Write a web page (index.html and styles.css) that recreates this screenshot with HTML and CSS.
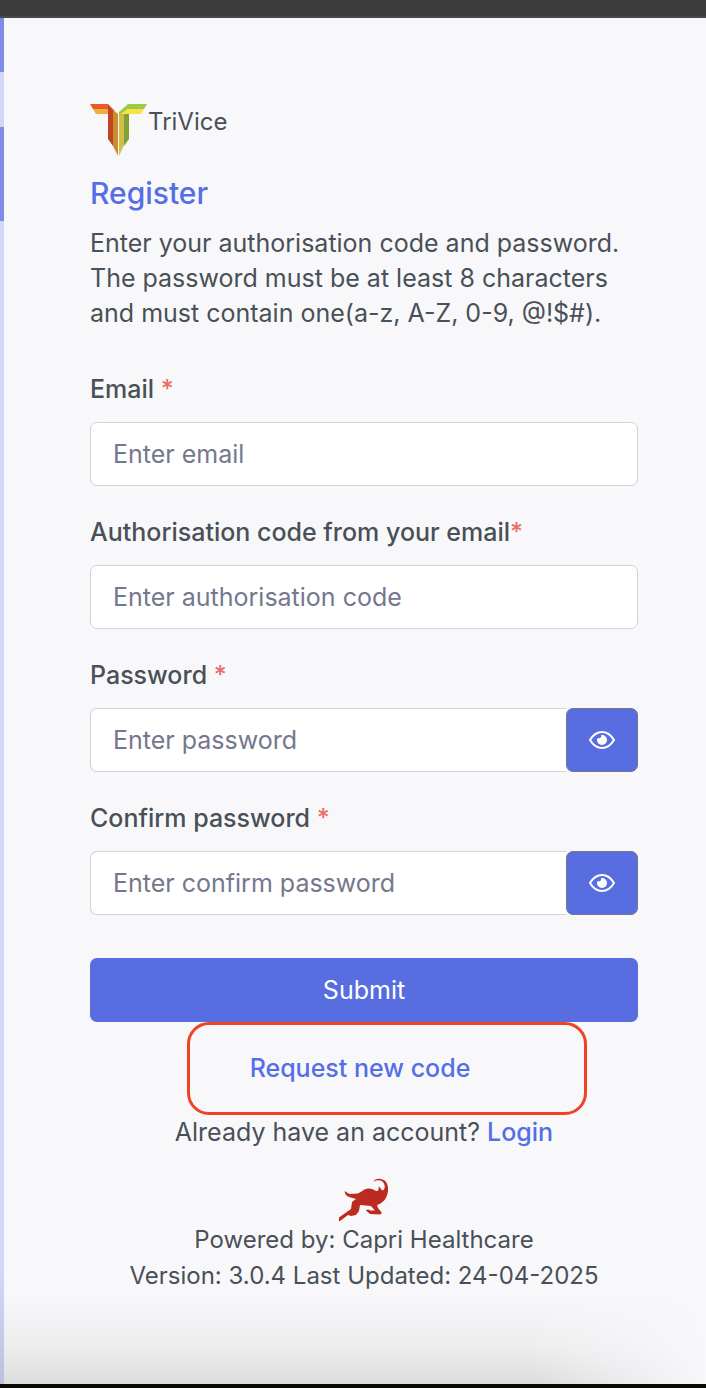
FILE: index.html
```html
<!DOCTYPE html>
<html lang="en">
<head>
    <meta charset="UTF-8">
    <meta name="viewport" content="width=device-width, initial-scale=1.0">
    <title>TriVice | Register</title>
    <link rel="stylesheet" href="styles.css">
</head>
<body>
    <div class="top-bar"></div>

    <div class="page">
        <div class="side-art"></div>

        <main class="register">
            <!-- Logo -->
            <div class="brand">
                <svg class="brand-logo" viewBox="0 0 57 54" aria-hidden="true">
                    <path fill="#e85a2b" d="M0 1h18l7 7-3 1-4-3H3z"/>
                    <path fill="#f0ac3c" d="M3 6h15v5H6z"/>
                    <path fill="#9ccb45" d="M38 1h19l-3 5H38l-6 5h-3V9z"/>
                    <path fill="#fbe343" d="M38 6h16l-3 5H34l-5 1z"/>
                    <path fill="#bd4522" d="M18 2l5 6v35l-5-7z"/>
                    <path fill="#c98c2f" d="M23 7l5 4v42l-5-10z"/>
                    <path fill="#d3bd42" d="M29 11h5v31l-5 11z"/>
                    <path fill="#7da338" d="M34 11h5v25l-5 7z"/>
                </svg>
                <span class="brand-name">TriVice</span>
            </div>

            <h1>Register</h1>
            <p class="intro">Enter your authorisation code and password. The password must be at least 8 characters and must contain one(a-z, A-Z, 0-9, @!$#).</p>

            <!-- Register Form -->
            <form class="register-form">
                <div class="field">
                    <label for="email">Email <span class="required">*</span></label>
                    <input type="email" id="email" placeholder="Enter email">
                </div>
                <div class="field">
                    <label for="code">Authorisation code from your email<span class="required">*</span></label>
                    <input type="text" id="code" placeholder="Enter authorisation code">
                </div>
                <div class="field">
                    <label for="password">Password <span class="required">*</span></label>
                    <div class="input-group">
                        <input type="password" id="password" placeholder="Enter password">
                        <button type="button" class="toggle" aria-label="Show password">
                            <svg viewBox="0 0 28 20" aria-hidden="true">
                                <path fill="none" stroke="#fff" stroke-width="2" d="M2 10C5 5 9 2 14 2s9 3 12 8c-3 5-7 8-12 8S5 15 2 10z"/>
                                <path fill="#fff" d="M14 5a5 5 0 1 1-5 5c0-1 0-1 1-2 2 1 4-1 3-3z"/>
                            </svg>
                        </button>
                    </div>
                </div>
                <div class="field">
                    <label for="confirm">Confirm password <span class="required">*</span></label>
                    <div class="input-group">
                        <input type="password" id="confirm" placeholder="Enter confirm password">
                        <button type="button" class="toggle" aria-label="Show confirm password">
                            <svg viewBox="0 0 28 20" aria-hidden="true">
                                <path fill="none" stroke="#fff" stroke-width="2" d="M2 10C5 5 9 2 14 2s9 3 12 8c-3 5-7 8-12 8S5 15 2 10z"/>
                                <path fill="#fff" d="M14 5a5 5 0 1 1-5 5c0-1 0-1 1-2 2 1 4-1 3-3z"/>
                            </svg>
                        </button>
                    </div>
                </div>
                <button type="submit" class="submit">Submit</button>
            </form>

            <p class="request"><a href="#">Request new code</a></p>
            <p class="login">Already have an account? <a href="#">Login</a></p>

            <!-- Footer -->
            <footer class="footer">
                <svg class="capri" viewBox="0 0 50 44" aria-hidden="true">
                    <path fill="#bd2a20" d="M0 39.5L12 31l1-7 4-3-7-2c-3-1-4-3-4.500-6l5 3 8-.5c4-1 6-5 11-5 4 0 6 2 8 2.500 2 0 2.500-1.500 2-4.500 2 .5 2 3 4 4 3-1 3-6 0-9-3-2-6-1-9 0 1-2 4-3 7-2.500 6 .5 8 6 7.500 12C48 21 44 25 38 27l1 3 4 5-2 1.500-10-.5-4-3.500c1-1.500 3-1.500 4 0h5l-4-4.500-11-1-1 6-3 4-5 1-3-1L1 43H0z"/>
                </svg>
                <p>Powered by: Capri Healthcare</p>
                <p>Version: 3.0.4 Last Updated: 24-04-2025</p>
            </footer>
        </main>
    </div>

    <div class="bottom-bar"></div>
</body>
</html>
```
FILE: styles.css
```css
/* General Styles */
* {
    box-sizing: border-box;
}

body {
    display: flex;
    flex-direction: column;
    min-height: 100vh;
    margin: 0;
    font-family: Inter, "Open Sans", sans-serif;
    font-size: 25px;
    line-height: 35px;
    color: #495057;
    background-color: #f8f8fb;
}

h1,
p {
    margin: 0;
}

a {
    color: #556ee6;
    font-weight: 500;
    text-decoration: none;
}

.top-bar {
    height: 18px;
    background: #3c3c3c;
    border-bottom: 2px solid #48484a;
}

.bottom-bar {
    height: 4px;
    background: #0c0a04;
}

.page {
    display: flex;
    flex: 1;
}

/* Edge of the artwork panel */
.side-art {
    width: 4px;
    background: linear-gradient(#7f8de6 54px, #d3d7f5 54px, #d3d7f5 109px, #7f8de6 109px, #7f8de6 203px, #d3d7f5 203px, #d3d7f5 92%, #bcc0df);
}

.register {
    flex: 1;
    padding: 85px 68px 40px 86px;
    background:
        linear-gradient(to right, rgba(248, 248, 251, 0) 75%, #f8f8fb) bottom / 100% 90px no-repeat,
        linear-gradient(rgba(220, 220, 221, 0), #ededee 60%, #dcdcdd) bottom / 100% 90px no-repeat,
        #f8f8fb;
}

/* Logo */
.brand {
    display: flex;
    gap: 1px;
}

.brand-logo {
    width: 57px;
    height: 54px;
}

.brand-name {
    font-size: 24px;
    line-height: 38px;
}

h1 {
    margin: 18px 0 15px;
    font-size: 30px;
    font-weight: 500;
    line-height: 36px;
    color: #556ee6;
}

/* Form */
.register-form {
    display: flex;
    flex-direction: column;
    gap: 29px;
    margin-top: 41px;
}

.field {
    display: flex;
    flex-direction: column;
    gap: 15px;
}

label {
    font-weight: 500;
}

.required {
    color: #ea6e6a;
}

input {
    width: 100%;
    height: 64px;
    padding: 0 22px;
    font: inherit;
    color: #495057;
    background: #fff;
    border: 1px solid #ced4da;
    border-radius: 7px;
}

input::placeholder {
    color: #74788d;
    opacity: 1;
}

.input-group {
    display: flex;
}

.input-group input {
    flex: 1;
    min-width: 0;
    border-right: 0;
    border-radius: 7px 0 0 7px;
}

.toggle {
    display: flex;
    align-items: center;
    justify-content: center;
    width: 72px;
    background: #586ddf;
    border: 1px solid #74788d;
    border-radius: 7px;
}

.toggle svg {
    width: 28px;
    height: 20px;
}

.submit {
    height: 64px;
    margin-top: 14px;
    font: inherit;
    color: #fff;
    background: #586ddf;
    border: 0;
    border-radius: 7px;
}

/* Links */
.request {
    position: relative;
    padding: 29px 8px 29px 0;
    text-align: center;
}

/* Highlight around the link */
.request::after {
    content: "";
    position: absolute;
    top: 0;
    bottom: 0;
    left: calc(50% - 177px);
    box-sizing: border-box;
    width: 400px;
    border: 3px solid #ec4425;
    border-radius: 22px;
    pointer-events: none;
}

.login {
    text-align: center;
}

/* Footer */
.footer {
    margin-top: 28px;
    font-size: 24px;
    line-height: 36px;
    text-align: center;
}

.capri {
    display: block;
    width: 50px;
    height: 44px;
    margin: 0 auto;
}
```
